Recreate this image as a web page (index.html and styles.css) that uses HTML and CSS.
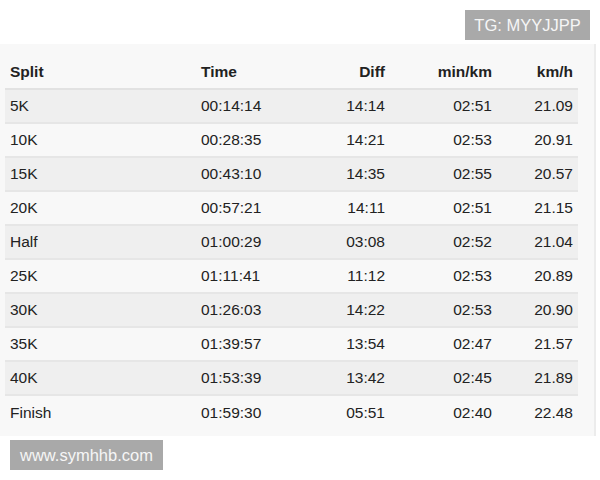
FILE: index.html
```html
<!DOCTYPE html>
<html>
<head>
<meta charset="utf-8">
<link rel="stylesheet" href="styles.css">
</head>
<body>
<div class="top"><span class="badge">TG: MYYJJPP</span></div>
<div class="panel">
<table class="splits">
<thead>
<tr><th class="c-split">Split</th><th class="c-time">Time</th><th class="c-diff">Diff</th><th class="c-pace">min/km</th><th class="c-speed">km/h</th></tr>
</thead>
<tbody>
<tr><td>5K</td><td>00:14:14</td><td class="r">14:14</td><td class="r">02:51</td><td class="r">21.09</td></tr>
<tr><td>10K</td><td>00:28:35</td><td class="r">14:21</td><td class="r">02:53</td><td class="r">20.91</td></tr>
<tr><td>15K</td><td>00:43:10</td><td class="r">14:35</td><td class="r">02:55</td><td class="r">20.57</td></tr>
<tr><td>20K</td><td>00:57:21</td><td class="r">14:11</td><td class="r">02:51</td><td class="r">21.15</td></tr>
<tr><td>Half</td><td>01:00:29</td><td class="r">03:08</td><td class="r">02:52</td><td class="r">21.04</td></tr>
<tr><td>25K</td><td>01:11:41</td><td class="r">11:12</td><td class="r">02:53</td><td class="r">20.89</td></tr>
<tr><td>30K</td><td>01:26:03</td><td class="r">14:22</td><td class="r">02:53</td><td class="r">20.90</td></tr>
<tr><td>35K</td><td>01:39:57</td><td class="r">13:54</td><td class="r">02:47</td><td class="r">21.57</td></tr>
<tr><td>40K</td><td>01:53:39</td><td class="r">13:42</td><td class="r">02:45</td><td class="r">21.89</td></tr>
<tr><td>Finish</td><td>01:59:30</td><td class="r">05:51</td><td class="r">02:40</td><td class="r">22.48</td></tr>
</tbody>
</table>
</div>
<div class="bottom"><span class="badge">www.symhhb.com</span></div>
</body>
</html>
```
FILE: styles.css
```css
html, body {
  margin: 0;
  padding: 0;
  background: #ffffff;
}
body {
  font-family: "Liberation Sans", Arial, sans-serif;
  color: #222222;
  width: 600px;
  height: 480px;
  overflow: hidden;
}
.top {
  height: 44px;
  box-sizing: border-box;
  padding: 10px 10px 0 0;
  display: flex;
  justify-content: flex-end;
  align-items: flex-start;
}
.badge {
  display: inline-block;
  background: #a9a9a9;
  color: #f6f6f6;
  font-size: 16.5px;
  height: 30px;
  line-height: 30px;
  padding: 0 10px;
  box-sizing: border-box;
  white-space: nowrap;
}
.top .badge {
  width: 125px;
  padding: 0;
  text-align: center;
}
.panel {
  width: 596px;
  height: 392px;
  box-sizing: border-box;
  background: #f8f8f8;
  border-right: 2px solid #ececec;
  padding: 11px 0 0 5px;
}
.splits {
  width: 573px;
  border-collapse: collapse;
  font-size: 15.5px;
}
.splits th, .splits td {
  height: 34px;
  padding: 0 5px;
  box-sizing: border-box;
  white-space: nowrap;
}
.splits th {
  font-weight: bold;
  text-align: left;
  border-bottom: 2px solid #e2e2e2;
}
.splits td {
  border-bottom: 2px solid #e6e6e6;
}
.splits tbody tr:nth-child(odd) td {
  background: #efefef;
}
.splits tbody tr:last-child td {
  border-bottom: none;
  background: transparent;
}
.c-split { width: 191px; }
.c-time { width: 100px; }
.splits .c-diff, .splits .c-pace, .splits .c-speed { text-align: right; }
.c-diff { width: 94px; }
.c-pace { width: 107px; }
.splits td.r { text-align: right; }
.bottom {
  padding: 4px 0 0 10px;
}
.bottom .badge {
  width: 153px;
}
```
